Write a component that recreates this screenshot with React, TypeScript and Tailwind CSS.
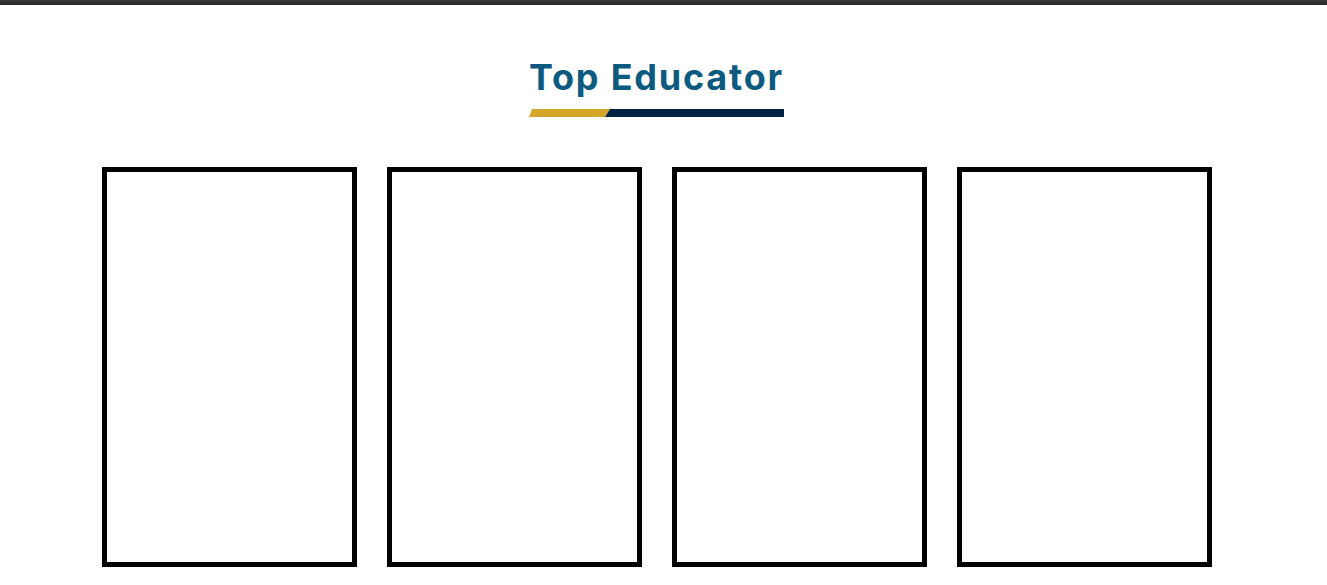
export default function App() {
  const cards = [0, 1, 2, 3];
  return (
    <div className="min-h-[585px] bg-white" style={{ fontFamily: "Inter, 'Open Sans', sans-serif" }}>
      <div className="h-[5px] bg-gradient-to-b from-[#3a3a3e] to-[#28282b]" />
      <div className="w-[1313px]">
        <div className="flex flex-col items-center pt-[50px]">
          <div className="flex w-[255px] flex-col items-center">
            <h2 className="whitespace-nowrap text-[36px] leading-[44px] font-bold text-[#0d5a80] tracking-[1.8px]">
              Top Educator
            </h2>
            <div className="mt-[10px] flex h-[8px] w-full">
              <div className="w-[81px] bg-[#d4a62a] [clip-path:polygon(3px_0,100%_0,calc(100%-5px)_100%,0_100%)]" />
              <div className="-ml-[5px] flex-1 bg-[#00213f] [clip-path:polygon(5px_0,100%_0,100%_100%,0_100%)]" />
            </div>
          </div>
        </div>
        <div className="mt-[50px] flex justify-center gap-[30px]">
          {cards.map((c) => (
            <div key={c} className="h-[400px] w-[255px] border-[5px] border-black bg-white" />
          ))}
        </div>
      </div>
    </div>
  );
}
